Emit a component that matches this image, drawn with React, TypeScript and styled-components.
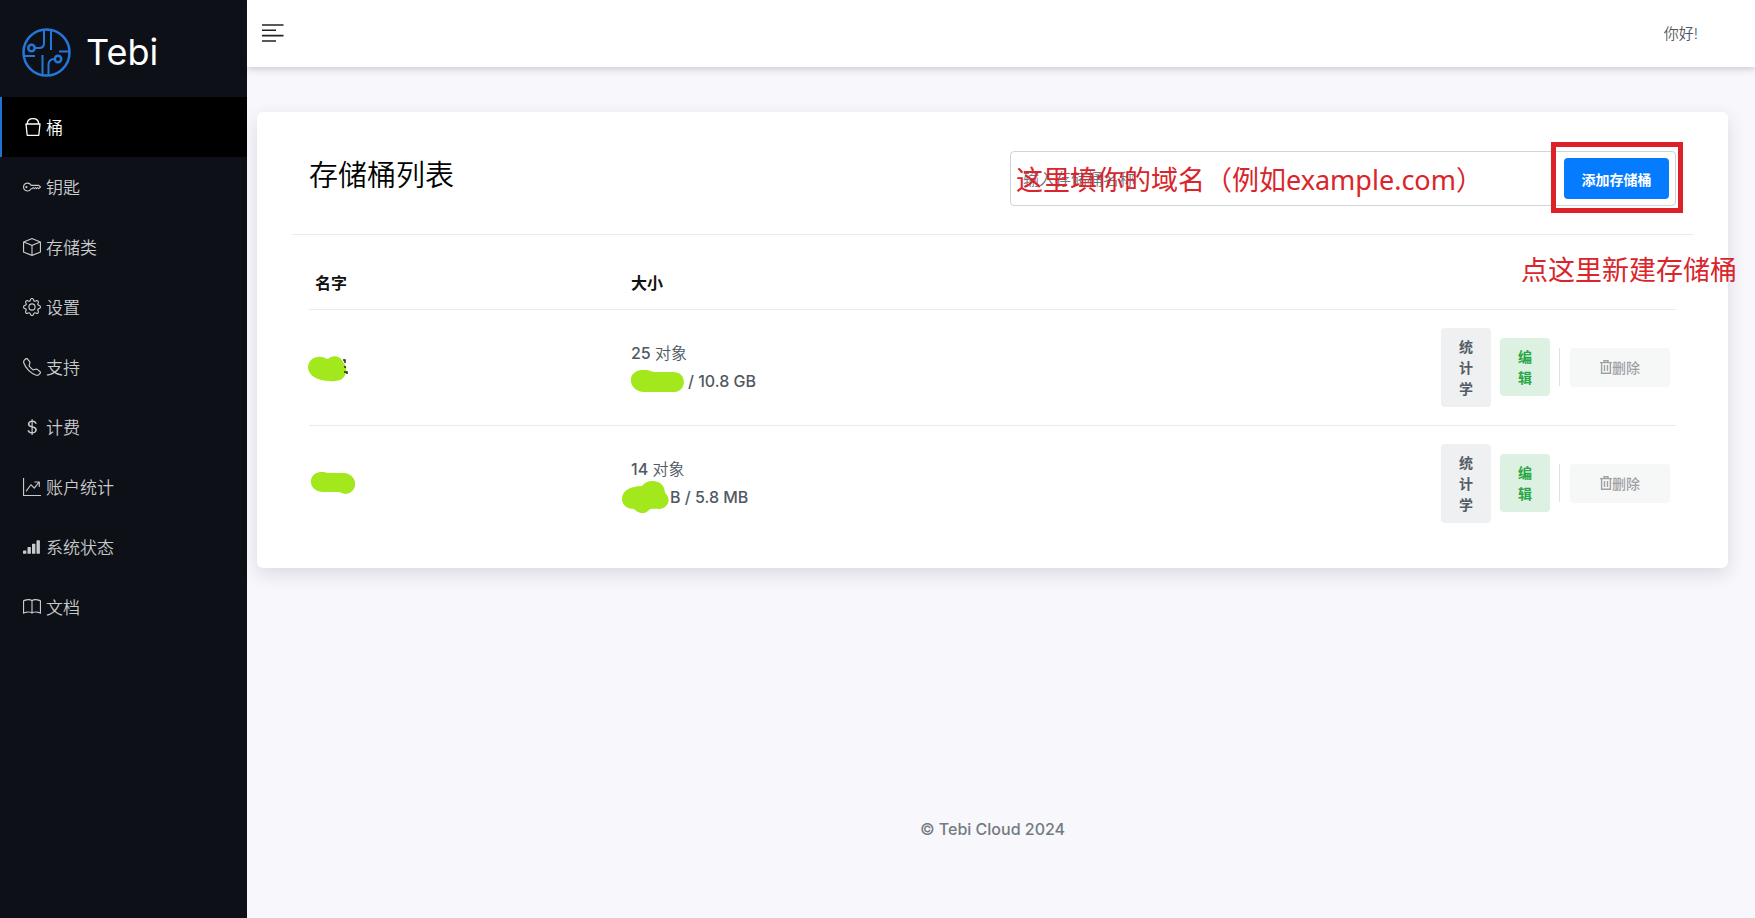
import React from 'react';
import styled, { createGlobalStyle } from 'styled-components';
import {
  BsKey, BsBox, BsGear, BsTelephone, BsCurrencyDollar,
  BsGraphUpArrow, BsReception4, BsBook,
} from 'react-icons/bs';

const GlobalStyle = createGlobalStyle`
  *, *::before, *::after { box-sizing: border-box; }
  body {
    margin: 0;
    background: #f7f7fc;
    color: #505962;
    font-family: Inter, "Noto Sans CJK SC", sans-serif;
    font-size: 16px;
    line-height: 28px;
  }
  button, input { font-family: inherit; }
`;

const Shell = styled.div`
  display: flex;
  min-height: 100vh;
`;

const Sidebar = styled.aside`
  flex: 0 0 247px;
  background: #0d1017;
`;

const Brand = styled.a`
  display: flex;
  align-items: center;
  gap: 15px;
  height: 97px;
  padding: 7px 22px 0;
  color: #fff;
  font-size: 36px;
  font-weight: 400;
  text-decoration: none;
`;

const NavLink = styled.a<{ $active?: boolean }>`
  display: flex;
  align-items: center;
  gap: 5px;
  height: 60px;
  padding-left: 21px;
  border-left: 2px solid ${p => (p.$active ? '#1f73d2' : 'transparent')};
  background: ${p => (p.$active ? '#000' : 'transparent')};
  color: ${p => (p.$active ? '#fff' : '#c9cacb')};
  font-family: "Noto Sans CJK SC", sans-serif;
  font-size: 17px;
  font-weight: 350;
  text-decoration: none;
  svg { width: 18px; height: 18px; flex: none; }
`;

const Main = styled.div`
  flex: 1;
  min-width: 0;
  display: flex;
  flex-direction: column;
`;

const TopBar = styled.header`
  display: flex;
  align-items: center;
  justify-content: space-between;
  height: 67px;
  padding: 0 57px 0 15px;
  background: #fff;
  box-shadow: 0 1px 8px rgba(40, 40, 60, 0.28);
  font-size: 15px;
  font-weight: 350;
`;

const MenuButton = styled.button`
  display: flex;
  padding: 0;
  border: 0;
  background: none;
  color: #222;
`;

const Card = styled.section`
  margin: 45px 27px 0 10px;
  padding: 39px 35px 27px;
  background: #fff;
  border-radius: 6px;
  box-shadow: 0 6px 18px rgba(40, 40, 70, 0.14);
`;

const CardHeader = styled.div`
  display: flex;
  align-items: flex-start;
  justify-content: space-between;
  height: 84px;
  padding: 0 17px;
  border-bottom: 1px solid #e9eaed;
`;

const Title = styled.h1`
  margin: 0;
  padding-top: 5px;
  color: #000;
  font-size: 29px;
  font-weight: 350;
  line-height: 40px;
`;

const AddForm = styled.form`
  position: relative;
  display: flex;
  align-items: center;
  width: 50%;
  max-width: 666px;
  height: 55px;
  padding: 0 6px 0 12px;
  border: 1px solid #ced4da;
  border-radius: 4px;
`;

const NameInput = styled.input`
  flex: 1;
  min-width: 0;
  height: 40px;
  padding: 0;
  border: 0;
  outline: 0;
  background: none;
  font-size: 16px;
  font-weight: 350;
  &::placeholder { color: #6c757d; opacity: 1; }
`;

const AddButton = styled.button`
  width: 105px;
  height: 41px;
  padding: 0;
  border: 0;
  border-radius: 4px;
  background: #057bff;
  color: #fff;
  font-size: 14px;
  font-weight: 700;
`;

const note = `
  position: absolute;
  color: #d9252b;
  font-family: "Noto Sans", "Noto Sans CJK SC", sans-serif;
  font-size: 27px;
  line-height: 36px;
  white-space: nowrap;
  pointer-events: none;
`;

const DomainNote = styled.span`
  ${note}
  left: 5px;
  top: 10px;
`;

const CreateNote = styled.span`
  ${note}
  right: -62px;
  top: 100px;
`;

const Highlight = styled.span`
  position: absolute;
  top: -10px;
  right: -8px;
  width: 132px;
  height: 71px;
  border: 5px solid #dc2128;
  pointer-events: none;
`;

const TableWrap = styled.div`
  padding: 20px 17px 0;
`;

const Table = styled.table`
  width: 100%;
  border-collapse: collapse;
  table-layout: fixed;
`;

const Th = styled.th<{ $width: string }>`
  width: ${p => p.$width};
  height: 54px;
  padding: 2px 6px 0;
  color: #111;
  font-size: 16px;
  font-weight: 700;
  text-align: left;
`;

const Row = styled.tr`
  border-top: 1px solid #e9eaed;
`;

const Td = styled.td`
  height: 116px;
  padding: 0 6px;
  vertical-align: middle;
`;

const NameCell = styled.div`
  position: relative;
  height: 28px;
  color: #111;
`;

const Size = styled.div`
  position: relative;
  color: #505962;
  font-weight: 500;
`;

const Scribble = styled.svg<{ $x: number; $y: number }>`
  position: absolute;
  left: ${p => p.$x}px;
  top: ${p => p.$y}px;
  fill: #a3e81d;
`;

const Quota = styled.div<{ $indent: number }>`
  padding-left: ${p => p.$indent}px;
`;

const CJK = styled.span`
  font-weight: 350;
`;

const Actions = styled.div`
  display: flex;
  align-items: center;
  justify-content: flex-end;
`;

const Action = styled.button<{ $kind: 'stats' | 'edit' }>`
  width: 50px;
  padding: 8px 17px;
  border: 0;
  border-radius: 4px;
  background: ${p => (p.$kind === 'edit' ? '#dcf1e1' : '#eff0f2')};
  color: ${p => (p.$kind === 'edit' ? '#28a745' : '#535d66')};
  font-size: 14px;
  font-weight: 700;
  line-height: 21px;
  margin-right: 9px;
`;

const Divider = styled.span`
  width: 1px;
  height: 38px;
  margin-right: 10px;
  background: #dee2e6;
`;

const DeleteButton = styled.button`
  display: flex;
  align-items: center;
  justify-content: center;
  width: 100px;
  height: 39px;
  padding: 0;
  border: 0;
  border-radius: 4px;
  background: #f6f7f7;
  color: #9da1a5;
  font-size: 14px;
  font-weight: 500;
`;

const Footer = styled.footer`
  margin: 247px 27px 75px 10px;
  color: #737b83;
  font-weight: 500;
  text-align: center;
`;

const Logo = () => (
  <svg width="49" height="49" viewBox="0 0 49 49" fill="none" stroke="#2377d8" strokeWidth="2" aria-hidden="true">
    <circle cx="24.5" cy="24.5" r="23" strokeWidth="2.500" />
    <circle cx="9.500" cy="20" r="3.200" strokeWidth="2.500" />
    <path d="M12.500 20H17q5 0 5-5V2M29 2v20M37 23.500H47M2 28h11M20.500 27v20M26.500 47V37q0-6 6-6" />
    <circle cx="36" cy="31" r="3.200" strokeWidth="2.500" />
  </svg>
);

const Bucket = () => (
  <svg viewBox="0 0 18 18" fill="none" stroke="currentColor" strokeWidth="1.300" strokeLinejoin="round" aria-hidden="true">
    <path d="M4.300 6C4.300 2.500 6.500 .7 10 .7S15.700 2.500 15.700 6M3 6H17L15.800 17.300H4.200Z" />
  </svg>
);

const MenuIcon = () => (
  <svg width="22" height="20" viewBox="0 0 22 20" stroke="currentColor" strokeWidth="1.600" aria-hidden="true">
    <path d="M0 1h21.500M0 6.300h14M0 11.600h21.500M0 17h14" />
  </svg>
);

const Trash = () => (
  <svg width="12" height="14" viewBox="0 0 12 14" fill="none" stroke="currentColor" strokeWidth="1.400" aria-hidden="true">
    <path d="M0 2.600h12M4 2.600V.7h4v1.900M1.600 2.600v10.700h8.800V2.600M4.500 5v6M7.500 5v6" />
  </svg>
);

const navItems = [
  { label: '桶', icon: Bucket },
  { label: '钥匙', icon: BsKey },
  { label: '存储类', icon: BsBox },
  { label: '设置', icon: BsGear },
  { label: '支持', icon: BsTelephone },
  { label: '计费', icon: BsCurrencyDollar },
  { label: '账户统计', icon: BsGraphUpArrow },
  { label: '系统状态', icon: BsReception4 },
  { label: '文档', icon: BsBook },
];

const RowActions = () => (
  <Actions>
    <Action type="button" $kind="stats">统计学</Action>
    <Action type="button" $kind="edit">编辑</Action>
    <Divider />
    <DeleteButton type="button"><Trash />删除</DeleteButton>
  </Actions>
);

export default function App() {
  return (
    <>
      <GlobalStyle />
      <Shell>
        <Sidebar>
          <Brand href="#"><Logo />Tebi</Brand>
          <nav>
            {navItems.map(({ label, icon: Icon }, i) => (
              <NavLink href="#" key={label} $active={i === 0}><Icon />{label}</NavLink>
            ))}
          </nav>
        </Sidebar>
        <Main>
          <TopBar>
            <MenuButton type="button" aria-label="菜单"><MenuIcon /></MenuButton>
            <span>你好!</span>
          </TopBar>
          <Card>
            <CardHeader>
              <Title>存储桶列表</Title>
              <AddForm>
                <NameInput aria-label="存储桶名称" placeholder="输入存储桶名称" />
                <AddButton type="button">添加存储桶</AddButton>
                <DomainNote>这里填你的域名（例如example.com）</DomainNote>
                <Highlight />
                <CreateNote>点这里新建存储桶</CreateNote>
              </AddForm>
            </CardHeader>
            <TableWrap>
              <Table>
                <thead>
                  <tr>
                    <Th $width="316px">名字</Th>
                    <Th $width="auto">大小</Th>
                    <Th $width="260px" aria-label="操作" />
                  </tr>
                </thead>
                <tbody>
                  <Row>
                    <Td>
                      <NameCell>
                        <Scribble $x={-7} $y={3} width="40" height="26" viewBox="0 0 40 26">
                          <path d="M10 1C15 0 17 3 20 3C23 0 29-1 33 3C36 7 39 10 38 16C37 23 31 26 22 25C10 25 1 20 0 12C0 6 4 1 10 1Z" />
                          <path d="M35 4h2v3M37 10v2M36 16h3v2" fill="none" stroke="#222" strokeWidth="1.500" />
                        </Scribble>
                      </NameCell>
                    </Td>
                    <Td>
                      <Size>
                        25 <CJK>对象</CJK>
                        <Quota $indent={57}>/ 10.8 GB</Quota>
                        <Scribble $x={0} $y={31} width="53" height="22" viewBox="0 0 53 22">
                          <path d="M10 0C18-1 20 2 24 2H43C56 3 56 20 44 22H13C-3 21-5 2 10 0Z" />
                        </Scribble>
                      </Size>
                    </Td>
                    <Td><RowActions /></Td>
                  </Row>
                  <Row>
                    <Td>
                      <NameCell>
                        <Scribble $x={-4} $y={3} width="44" height="22" viewBox="0 0 44 22">
                          <path d="M9 0C12-1 15 1 18 1H33C47 2 48 20 35 22C32 22 30 20 27 20H11C-3 19-4 2 9 0Z" />
                        </Scribble>
                      </NameCell>
                    </Td>
                    <Td>
                      <Size>
                        14 <CJK>对象</CJK>
                        <Quota $indent={39}>B / 5.8 MB</Quota>
                        <Scribble $x={-9} $y={26} width="47" height="33" viewBox="0 0 47 33">
                          <path d="M20 5C25-2 37-1 41 5C43 8 42 11 45 14C49 20 45 27 38 28C32 28 28 27 26 30C21 34 16 32 12 28C5 28 0 24 0 18C0 10 8 5 20 5Z" />
                        </Scribble>
                      </Size>
                    </Td>
                    <Td><RowActions /></Td>
                  </Row>
                </tbody>
              </Table>
            </TableWrap>
          </Card>
          <Footer>© Tebi Cloud 2024</Footer>
        </Main>
      </Shell>
    </>
  );
}
